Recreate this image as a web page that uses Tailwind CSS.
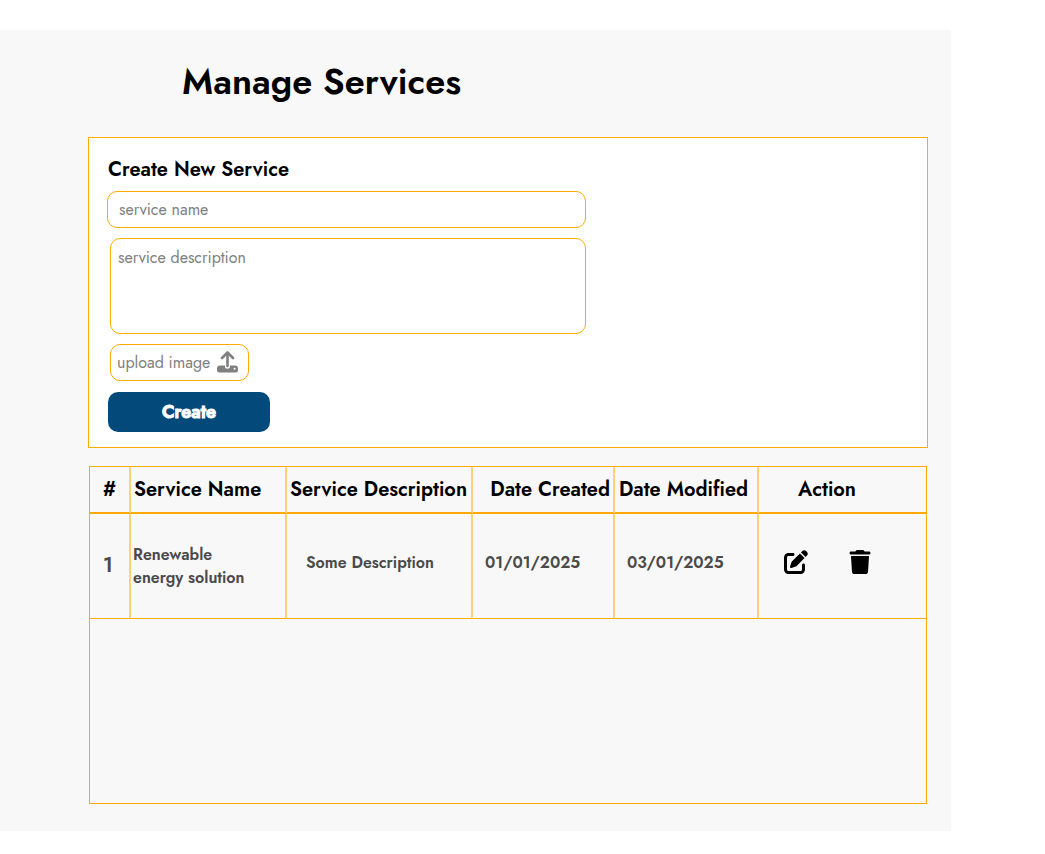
<!DOCTYPE html>
<html lang="en">
<head>
<meta charset="utf-8">
<meta name="viewport" content="width=device-width, initial-scale=1">
<title>Manage Services</title>
<script src="https://cdn.jsdelivr.net/npm/@tailwindcss/browser@4"></script>
</head>
<body class="bg-white py-[30px] pr-[94px] font-['Jost','Lato',sans-serif] text-black">
<main class="bg-[#f8f8f8] pt-[27px] pr-[23px] pb-[27px] pl-[88px]">
  <h1 class="pl-[94px] text-4xl leading-12 font-semibold">Manage Services</h1>

  <section class="mt-8 border border-[#ffaa00] bg-white px-[18px] pt-5 pb-[15px]">
    <h2 class="pl-px text-xl leading-6 font-semibold">Create New Service</h2>
    <form class="mt-[9px] flex max-w-[479px] flex-col items-start">
      <input type="text" aria-label="service name" placeholder="service name" class="h-[37px] w-full rounded-[10px] border border-[#ffaa00] px-[11px] text-base placeholder:text-[#808080]">
      <div class="mt-[10px] flex w-full flex-col items-start gap-[10px] pl-[3px]">
        <textarea aria-label="service description" placeholder="service description" class="block h-24 w-full resize-none rounded-[10px] border border-[#ffaa00] px-[7px] py-[7px] text-base leading-6 placeholder:text-[#808080]"></textarea>
        <label for="image" class="flex h-[37px] w-[139px] cursor-pointer items-center justify-between rounded-[10px] border border-[#ffaa00] pr-[10px] pl-[6px] text-base text-[#808080]">
          upload image
          <svg class="h-6 w-[21px] shrink-0" viewBox="0 0 21 24" fill="none" aria-hidden="true">
            <path d="M10.500 15V2M5 7 10.500 1.500 16 7" stroke="currentColor" stroke-width="2.600" stroke-linecap="round" stroke-linejoin="round"/>
            <path fill="currentColor" fill-rule="evenodd" d="M3 14.500h5v.8a2.500 2.500 0 0 0 5 0v-.8h5a3 3 0 0 1 3 3V19a2.500 2.500 0 0 1-2.500 2.500h-16A2.500 2.500 0 0 1 0 19v-1.500a3 3 0 0 1 3-3Zm14.600 2.300a1 1 0 1 0 0 2 1 1 0 0 0 0-2Z"/>
          </svg>
          <input id="image" type="file" class="sr-only">
        </label>
      </div>
      <button type="button" class="mt-[11px] ml-px h-10 w-[162px] rounded-[10px] bg-[#034a7b] text-lg font-semibold text-white [-webkit-text-stroke:1px_white]">Create</button>
    </form>
  </section>

  <section class="mt-[18px] mr-px ml-px border border-[#ffaa00] pb-[184px]">
    <table class="w-full table-fixed border-separate border-spacing-0 text-left">
      <colgroup>
        <col class="w-[41px]"><col class="w-[156px]"><col class="w-[186px]"><col class="w-[142px]"><col class="w-[144px]"><col>
      </colgroup>
      <thead>
        <tr class="h-[47px] text-xl leading-6 whitespace-nowrap">
          <th scope="col" class="border-r-2 border-b-2 border-r-[#ffaa00]/50 border-b-[#ffaa00] p-0 text-center font-semibold">#</th>
          <th scope="col" class="border-r-2 border-b-2 border-r-[#ffaa00]/50 border-b-[#ffaa00] p-0 pl-[3px] font-semibold">Service Name</th>
          <th scope="col" class="border-r-2 border-b-2 border-r-[#ffaa00]/50 border-b-[#ffaa00] p-0 pl-[3px] font-semibold">Service Description</th>
          <th scope="col" class="border-r-2 border-b-2 border-r-[#ffaa00]/50 border-b-[#ffaa00] p-0 pr-[3px] text-right font-semibold">Date Created</th>
          <th scope="col" class="border-r-2 border-b-2 border-r-[#ffaa00]/50 border-b-[#ffaa00] p-0 pl-1 font-semibold">Date Modified</th>
          <th scope="col" class="border-b-2 border-[#ffaa00] p-0 pl-[39px] font-semibold">Action</th>
        </tr>
      </thead>
      <tbody>
        <tr class="h-[105px] text-base leading-[23px] font-semibold text-[#4a4a4a]">
          <td class="border-r-2 border-b border-r-[#ffaa00]/50 border-b-[#ffaa00] p-0 pr-[3px] text-center text-xl">1</td>
          <td class="border-r-2 border-b border-r-[#ffaa00]/50 border-b-[#ffaa00] p-0 pr-8 pl-[2px]">Renewable energy solution</td>
          <td class="border-r-2 border-b border-r-[#ffaa00]/50 border-b-[#ffaa00] p-0 pb-2 pl-[19px]">Some Description</td>
          <td class="border-r-2 border-b border-r-[#ffaa00]/50 border-b-[#ffaa00] p-0 pb-2 pl-3">01/01/2025</td>
          <td class="border-r-2 border-b border-r-[#ffaa00]/50 border-b-[#ffaa00] p-0 pb-2 pl-3">03/01/2025</td>
          <td class="border-b border-[#ffaa00] p-0 pb-2 pl-[25px]">
            <div class="flex items-center gap-[41px] text-black">
              <button type="button" aria-label="Edit" class="cursor-pointer">
                <svg class="block size-6" viewBox="0 0 512 512" fill="currentColor" aria-hidden="true"><path d="M471.600 21.700c-21.900-21.900-57.300-21.900-79.200 0L362.300 51.700l97.900 97.900 30.100-30.100c21.900-21.900 21.900-57.300 0-79.200L471.600 21.700zm-299.200 220c-6.100 6.100-10.800 13.600-13.500 21.900l-29.600 88.800c-2.900 8.600-.6 18.100 5.800 24.600s15.900 8.700 24.600 5.800l88.800-29.600c8.200-2.700 15.700-7.400 21.900-13.500L437.700 172.300 339.700 74.300 172.400 241.700zM96 64C43 64 0 107 0 160V416c0 53 43 96 96 96H352c53 0 96-43 96-96V320c0-17.700-14.300-32-32-32s-32 14.300-32 32v96c0 17.700-14.300 32-32 32H96c-17.700 0-32-14.300-32-32V160c0-17.700 14.300-32 32-32h96c17.700 0 32-14.300 32-32s-14.300-32-32-32H96z"/></svg>
              </button>
              <button type="button" aria-label="Delete" class="cursor-pointer">
                <svg class="block h-6 w-[22px]" viewBox="0 0 448 512" fill="currentColor" aria-hidden="true"><path d="M135.200 17.700L128 32H32C14.300 32 0 46.300 0 64S14.300 96 32 96H416c17.700 0 32-14.300 32-32s-14.300-32-32-32H320l-7.200-14.300C307.400 6.800 296.300 0 284.200 0H163.800c-12.100 0-23.200 6.800-28.600 17.700zM416 128H32L53.200 467c1.600 25.300 22.600 45 47.900 45H346.900c25.300 0 46.300-19.700 47.900-45L416 128z"/></svg>
              </button>
            </div>
          </td>
        </tr>
      </tbody>
    </table>
  </section>
</main>
</body>
</html>
